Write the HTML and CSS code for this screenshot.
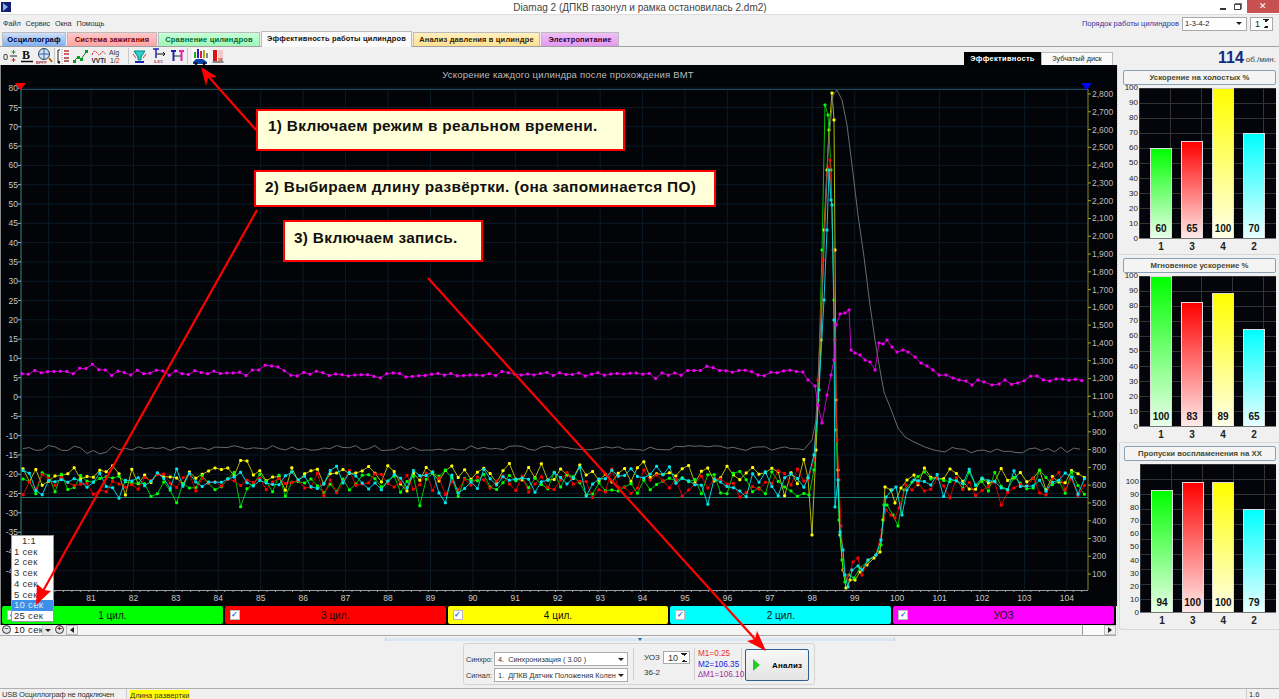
FILE: index.html
```html
<!DOCTYPE html>
<html lang="ru">
<head>
    <meta charset="UTF-8">
    <meta name="viewport" content="width=device-width, initial-scale=1.0">
    <title>Diamag 2</title>
    <link rel="stylesheet" href="styles.css">
</head>
<body>
    <header class="titlebar">
        <svg class="app-icon" width="10" height="10" viewBox="0 0 10 10"><rect width="10" height="10" fill="#14206e"/><path d="M2 1l5 4-5 4z" fill="#7fb4ee"/></svg>
        <span class="title-text">Diamag 2 (ДПКВ газонул и рамка остановилась 2.dm2)</span>
        <div class="win-buttons">
            <span class="win-min"></span>
            <span class="win-max"></span>
            <span class="win-close">✕</span>
        </div>
    </header>

    <div class="menubar">
        <nav class="menu">
            <span>Файл</span><span>Сервис</span><span>Окна</span><span>Помощь</span>
        </nav>
        <div class="order">
            <span class="order-label">Порядок работы цилиндров</span>
            <div class="select order-select"><span>1-3-4-2</span><i class="caret"></i></div>
            <div class="spin order-spin"><span>1</span><i class="spin-arrows"></i></div>
        </div>
    </div>

    <div class="tabs">
        <span class="tab tab-blue">Осциллограф</span>
        <span class="tab tab-pink">Система зажигания</span>
        <span class="tab tab-green">Сравнение цилиндров</span>
        <span class="tab tab-active">Эффективность работы цилиндров</span>
        <span class="tab tab-yellow">Анализ давления в цилиндре</span>
        <span class="tab tab-purple">Электропитание</span>
    </div>

    <div class="toolbar">
        <div class="tools">
            <svg class="tool" width="15" height="16" viewBox="0 0 15 16"><text x="0" y="12" class="ico-text">0</text><path d="M7 8h7" stroke="#222"/><path d="M10.500 2v4M8.500 4h4" stroke="#1a9a2a"/><path d="M10.500 10v4M8.500 12h4" stroke="#d22"/></svg>
            <svg class="tool" width="14" height="16" viewBox="0 0 14 16"><text x="2" y="11" class="ico-bold">B</text><path d="M1 13.500h12" stroke="#111" stroke-width="1.500"/></svg>
            <svg class="tool" width="17" height="16" viewBox="0 0 17 16"><circle cx="8" cy="6" r="5.500" fill="#cfe0f4" stroke="#245"/><path d="M2 6h12M8 1v10" stroke="#36a"/><text x="0" y="15.500" class="ico-tiny">BPPP</text><path d="M13 10l3 4" stroke="#b60" stroke-width="2"/></svg>
            <i class="tool-sep"></i>
            <svg class="tool tool-on" width="15" height="17" viewBox="0 0 15 17"><path d="M4 2H2v13h2" fill="none" stroke="#222"/><circle cx="3" cy="14" r="1.200" fill="#222"/><path d="M8 3h5M8 6h5" stroke="#c33" stroke-width="1.500"/><path d="M8 10h5M8 13h5" stroke="#933" stroke-width="1.500"/><path d="M6 1v15" stroke="#999" stroke-dasharray="1 1"/></svg>
            <svg class="tool" width="16" height="16" viewBox="0 0 16 16"><path d="M1 13l4-4 3 2 6-8" fill="none" stroke="#083"/><g fill="#0a9a2a"><rect x="0" y="12" width="3" height="3"/><rect x="4" y="8" width="3" height="3"/><rect x="7" y="10" width="3" height="3"/><rect x="12" y="2" width="3" height="3"/></g></svg>
            <svg class="tool" width="16" height="16" viewBox="0 0 16 16"><path d="M1 7c2-5 3-5 5-2s3 2 4 0 3-2 5 2" fill="none" stroke="#d23" stroke-dasharray="2 1"/><text x="0.500" y="14.500" class="ico-vvt">VVTi</text></svg>
            <svg class="tool" width="14" height="16" viewBox="0 0 14 16"><text x="0" y="7" class="ico-alg">Alg</text><text x="1" y="15" class="ico-alg">1/<tspan fill="#d22">2</tspan></text></svg>
            <i class="tool-sep sep-wide"></i>
            <svg class="tool" width="15" height="16" viewBox="0 0 15 16"><path d="M2 3h11l-4 6v3H6V9z" fill="#2ad0c8" stroke="#088"/><path d="M1 6l3 4M14 6l-3 4" stroke="#e33"/><path d="M3 14h9" stroke="#22a" stroke-width="2"/></svg>
            <svg class="tool ml-3" width="15" height="16" viewBox="0 0 15 16"><path d="M1 1h6M4 1v9" stroke="#22a" stroke-width="1.500"/><path d="M5 6h8M11 4l2 2-2 2" fill="none" stroke="#111"/><text x="2" y="15" class="ico-tiny">0.2/1</text></svg>
            <svg class="tool ml-1" width="15" height="16" viewBox="0 0 15 16"><path d="M1 3h5M3.500 3v10" stroke="#22a" stroke-width="2"/><path d="M9 3h5M11.500 3v10" stroke="#e2a" stroke-width="2"/><path d="M4 8h7" stroke="#333"/></svg>
            <i class="tool-sep sep-flat"></i>
            <svg class="tool tool-on ml-2" width="17" height="17" viewBox="0 0 17 17"><rect x="2" y="4" width="2" height="6" fill="#2a2"/><rect x="5" y="1" width="2" height="9" fill="#22c"/><rect x="8" y="3" width="2" height="7" fill="#d22"/><rect x="11" y="2" width="2" height="8" fill="#aa2"/><rect x="14" y="5" width="2" height="5" fill="#888"/><path d="M1 14l3-3h7l4 3v2H1z" fill="#14a"/><circle cx="4" cy="15.500" r="1.500" fill="#111"/><circle cx="12" cy="15.500" r="1.500" fill="#111"/></svg>
            <svg class="tool ml-1" width="12" height="16" viewBox="0 0 12 16"><rect x="1" y="2" width="4" height="11" fill="#d11"/><path d="M6 2h5v11H6z" fill="#f3c8c8"/><path d="M0.500 14h11" stroke="#222"/><text x="6" y="12.500" class="ico-tiny">18</text></svg>
        </div>
        <div class="toolbar-right">
            <div class="subtabs">
                <span class="subtab subtab-on">Эффективность</span>
                <span class="subtab">Зубчатый диск</span>
            </div>
            <div class="rpm"><b>114</b><span>об./мин.</span></div>
        </div>
    </div>

    <main class="workspace">
        <section class="scope">
            <svg id="scope-chart" class="scope-chart" width="1115" height="541" viewBox="0 65 1115 541"></svg>
            <div class="legend">
                <div class="legend-item c-green"><i class="check">✓</i><span>1 цил.</span></div>
                <div class="legend-item c-red"><i class="check">✓</i><span>3 цил.</span></div>
                <div class="legend-item c-yellow"><i class="check">✓</i><span>4 цил.</span></div>
                <div class="legend-item c-cyan"><i class="check">✓</i><span>2 цил.</span></div>
                <div class="legend-item c-magenta"><i class="check">✓</i><span>УОЗ</span></div>
            </div>
            <div class="scrollrow">
                <i class="round-btn">−</i>
                <span class="sweep-value">10 сек</span>
                <i class="sweep-drop"><i class="caret"></i></i>
                <i class="round-btn round-plus">+</i>
                <i class="scroll-btn scroll-left"></i>
                <div class="scroll-track"></div>
                <div class="scroll-thumb"></div>
                <i class="scroll-btn scroll-right"></i>
            </div>
        </section>

        <i class="splitter"></i>

        <aside class="side">
            <div class="side-group">
                <div class="side-head">Ускорение на холостых %</div>
                <div class="bar-chart h-150">
                    <div class="y-labels"><span>100</span><span>90</span><span>80</span><span>70</span><span>60</span><span>50</span><span>40</span><span>30</span><span>20</span><span>10</span><span>0</span></div>
                    <div class="plot">
                        <div class="bar b-green" style="height:60%"><span>60</span></div>
                        <div class="bar b-red" style="height:65%"><span>65</span></div>
                        <div class="bar b-yellow" style="height:100%"><span>100</span></div>
                        <div class="bar b-cyan" style="height:70%"><span>70</span></div>
                    </div>
                </div>
                <div class="x-labels"><span>1</span><span>3</span><span>4</span><span>2</span></div>
            </div>
            <div class="side-group">
                <div class="side-head">Мгновенное ускорение %</div>
                <div class="bar-chart h-150">
                    <div class="y-labels"><span>100</span><span>90</span><span>80</span><span>70</span><span>60</span><span>50</span><span>40</span><span>30</span><span>20</span><span>10</span><span>0</span></div>
                    <div class="plot">
                        <div class="bar b-green" style="height:100%"><span>100</span></div>
                        <div class="bar b-red" style="height:83%"><span>83</span></div>
                        <div class="bar b-yellow" style="height:89%"><span>89</span></div>
                        <div class="bar b-cyan" style="height:65%"><span>65</span></div>
                    </div>
                </div>
                <div class="x-labels"><span>1</span><span>3</span><span>4</span><span>2</span></div>
            </div>
            <div class="side-group side-last">
                <div class="side-head">Пропуски воспламенения на ХХ</div>
                <div class="bar-chart h-130">
                    <div class="y-labels"><span>100</span><span>90</span><span>80</span><span>70</span><span>60</span><span>50</span><span>40</span><span>30</span><span>20</span><span>10</span><span>0</span></div>
                    <div class="plot">
                        <div class="bar b-green" style="height:94%"><span>94</span></div>
                        <div class="bar b-red" style="height:100%"><span>100</span></div>
                        <div class="bar b-yellow" style="height:100%"><span>100</span></div>
                        <div class="bar b-cyan" style="height:79%"><span>79</span></div>
                    </div>
                </div>
                <div class="x-labels"><span>1</span><span>3</span><span>4</span><span>2</span></div>
            </div>
        </aside>
    </main>

    <div class="bottom">
        <div class="collapse-grip"><i class="grip-arrow"></i></div>
        <div class="analysis">
            <div class="signals">
                <div class="signal-row">
                    <label>Синхро:</label>
                    <div class="select signal-select"><span>4.&nbsp; Синхронизация ( 3.00 )</span><i class="caret"></i></div>
                </div>
                <div class="signal-row">
                    <label>Сигнал:</label>
                    <div class="select signal-select"><span>1.&nbsp; ДПКВ Датчик Положения Колен</span><i class="caret"></i></div>
                </div>
            </div>
            <div class="uoz">
                <div class="uoz-row">
                    <span>УОЗ</span>
                    <div class="spin uoz-spin"><span>10</span><i class="spin-arrows"></i></div>
                </div>
                <span class="uoz-teeth">36-2</span>
            </div>
            <div class="measures">
                <span class="m-red">M1=0.25</span>
                <span class="m-blue">M2=106.35</span>
                <span class="m-purple">∆M1=106.10</span>
            </div>
            <div class="analyze-wrap">
                <button class="analyze"><i class="play"></i><b>Анализ</b></button>
            </div>
        </div>
    </div>

    <footer class="statusbar">
        <span class="status-usb">USB Осциллограф не подключен</span>
        <span class="status-hint">Длина развертки</span>
        <span class="status-ver">1.6</span>
    </footer>

    <!-- выпадающий список длины развёртки -->
    <ul class="sweep-list">
        <li class="first">1:1</li>
        <li>1 сек</li>
        <li>2 сек</li>
        <li>3 сек</li>
        <li>4 сек</li>
        <li>5 сек</li>
        <li class="picked">10 сек</li>
        <li>25 сек</li>
    </ul>

    <!-- подсказки поверх окна -->
    <div class="note note-1">1) Включаем режим в реальном времени.</div>
    <div class="note note-2">2) Выбираем длину развёртки. (она запоминается ПО)</div>
    <div class="note note-3">3) Включаем запись.</div>
    <svg class="arrows" width="1279" height="699" viewBox="0 0 1279 699">
        <g stroke="#f00" stroke-width="2.200" fill="#f00">
            <path d="M256 130L208 76"/>
            <path d="M257 210L43 591"/>
            <path d="M428 278L755 639"/>
        </g>
        <g fill="#f00">
            <path d="M201 67L217 77 208 78 206 86z"/>
            <path d="M36 605L37 584 44 590 51 591z"/>
            <path d="M766 651L747 641 755 639 757 631z"/>
        </g>
    </svg>

    <script src="chart.js"></script>
</body>
</html>
```

FILE: styles.css
```css
* {
    box-sizing: border-box;
}
html, body {
    margin: 0;
    padding: 0;
    height: 699px;
    overflow: hidden;
}
body {
    position: relative;
    width: 1279px;
    font-family: "Liberation Sans", Arial, sans-serif;
    font-size: 7.6px;
    color: #222;
    background-color: #f0f0f0;
    white-space: nowrap;
}
i {
    font-style: normal;
}

/* заголовок окна */
.titlebar {
    display: flex;
    align-items: center;
    height: 15px;
    background: #fff;
    border-bottom: 1px solid #ddd;
}
.app-icon {
    margin-left: 1px;
}
.title-text {
    flex: 1;
    text-align: center;
    font-size: 10px;
    color: #444;
    padding-left: 52px;
}
.win-buttons {
    display: flex;
    align-items: flex-start;
    height: 14px;
    width: 62px;
}
.win-min {
    width: 6px;
    height: 2px;
    background: #333;
    margin: 8px 8px 0 3px;
}
.win-max {
    width: 7px;
    height: 6px;
    border: 1px solid #444;
    box-shadow: 1px -1px 0 #777;
    margin: 4px 6px 0 0;
}
.win-close {
    width: 32px;
    height: 13px;
    background: #c75050;
    color: #fff;
    font-size: 9px;
    line-height: 13px;
    text-align: center;
}

/* меню */
.menubar {
    display: flex;
    justify-content: space-between;
    align-items: center;
    height: 17px;
    padding: 0 6px 0 3px;
}
.menu {
    display: flex;
    gap: 5px;
    color: #333;
    font-size: 7.300px;
    letter-spacing: -0.100px;
}
.order {
    display: flex;
    align-items: center;
    gap: 3px;
}
.order-label {
    color: #33339a;
    font-size: 7.500px;
}
.select, .spin {
    display: flex;
    align-items: center;
    justify-content: space-between;
    background: #fff;
    border: 1px solid #aaa;
}
.order-select {
    width: 65px;
    height: 14px;
    padding: 0 4px 0 2px;
}
.order-spin {
    width: 23px;
    height: 14px;
    padding: 0 3px 0 4px;
    font-size: 9px;
}
.caret {
    display: block;
    width: 0;
    height: 0;
    border-left: 3px solid transparent;
    border-right: 3px solid transparent;
    border-top: 3px solid #222;
}
.spin-arrows {
    display: block;
    width: 6px;
    height: 9px;
    background:
        linear-gradient(45deg, transparent 50%, #222 50%) left top / 3px 3px no-repeat,
        linear-gradient(-45deg, transparent 50%, #222 50%) right top / 3px 3px no-repeat,
        linear-gradient(135deg, transparent 50%, #222 50%) left bottom / 3px 3px no-repeat,
        linear-gradient(-135deg, transparent 50%, #222 50%) right bottom / 3px 3px no-repeat;
}

/* вкладки */
.tabs {
    display: flex;
    align-items: flex-end;
    height: 15px;
    padding-left: 2px;
    gap: 1px;
    border-bottom: 1px solid #a0a0a0;
}
.tab {
    height: 14px;
    font-size: 7.500px;
    font-weight: bold;
    line-height: 13px;
    letter-spacing: 0.150px;
    text-align: center;
    border: 1px solid #bbb;
    border-bottom: none;
    color: #223;
}
.tab-blue {
    width: 64px;
    background: linear-gradient(#cfe0fa, #7fb0f0);
    color: #003;
}
.tab-pink {
    width: 90px;
    background: linear-gradient(#ffc8c8, #ffa4a4);
    color: #700;
}
.tab-green {
    width: 102px;
    background: linear-gradient(#c8ffd8, #a0f8b8);
    color: #063;
}
.tab-active {
    width: 151px;
    height: 16px;
    background: #fafafa;
    color: #111;
    margin-bottom: -1px;
    line-height: 14px;
}
.tab-yellow {
    width: 127px;
    background: linear-gradient(#fff0c0, #ffe090);
    color: #320;
}
.tab-purple {
    width: 78px;
    background: linear-gradient(#f0c0f8, #e498f0);
    color: #303;
}

/* панель инструментов */
.toolbar {
    display: flex;
    justify-content: space-between;
    height: 18px;
}
.tools {
    display: flex;
    align-items: center;
    gap: 2px;
    padding-left: 3px;
}
.tool {
    display: block;
    flex: none;
}
.tool-on {
    background: #fafafa;
}
.ml-1 { margin-left: 1px; }
.ml-2 { margin-left: 2px; }
.ml-3 { margin-left: 3px; }
.tool-sep {
    width: 1px;
    height: 16px;
    background: #c8c8c8;
    margin: 0 -1px;
}
.sep-wide {
    margin: 0 1px 0 3px;
}
.sep-flat {
    margin: 0;
}
.ico-text {
    font-size: 9px;
    fill: #222;
}
.ico-bold {
    font-family: "Liberation Serif", serif;
    font-size: 12px;
    font-weight: bold;
    fill: #111;
}
.ico-tiny {
    font-size: 4px;
    fill: #a33;
    font-weight: bold;
}
.ico-vvt {
    font-size: 6.500px;
    fill: #223;
    font-weight: bold;
}
.ico-alg {
    font-size: 7px;
    fill: #333;
}
.toolbar-right {
    display: flex;
    align-items: flex-end;
}
.subtabs {
    display: flex;
    margin-right: 105px;
}
.subtab {
    width: 72px;
    height: 13px;
    line-height: 12px;
    text-align: center;
    font-size: 7.300px;
    background: #fafafa;
    border: 1px solid #bbb;
    border-bottom: none;
    color: #222;
}
.subtab-on {
    width: 77px;
    background: #000;
    color: #fff;
    font-weight: bold;
    font-size: 7.500px;
    letter-spacing: 0.300px;
    border-color: #000;
}
.rpm {
    display: flex;
    align-items: flex-end;
    width: 61px;
    gap: 2px;
    color: #444;
    font-size: 8px;
    line-height: 11px;
}
.rpm b {
    font-size: 16px;
    line-height: 15px;
    color: #102a80;
}

/* рабочая область */
.workspace {
    display: flex;
    height: 571px;
}
.scope {
    width: 1116px;
    padding-left: 1px;
    background: #000;
    border-left: 1px solid #888;
    height: 571px;
}
.scope-chart {
    display: block;
}
.legend {
    display: flex;
    gap: 2px;
    height: 18px;
    padding-right: 2px;
}
.legend-item {
    flex: 1;
    display: flex;
    align-items: center;
    padding-left: 5px;
    border-radius: 2px;
    font-size: 10px;
    color: #111;
}
.legend-item span {
    flex: 1;
    text-align: center;
    padding-right: 15px;
}
.check {
    display: block;
    width: 10px;
    height: 10px;
    background: #fff;
    border: 1px solid #bbb;
    color: #2a6ee8;
    font-size: 8px;
    font-weight: bold;
    line-height: 8px;
    text-align: center;
}
.c-green { background: #00ff00; }
.c-red { background: #ff0000; }
.c-yellow { background: #ffff00; }
.c-cyan { background: #00ffff; }
.c-magenta { background: #ff00ff; }

.scrollrow {
    display: flex;
    align-items: stretch;
    height: 11px;
    margin-left: -2px;
    margin-top: 1px;
    background: #f0f0f0;
    border-bottom: 1px solid #a8a8a8;
    width: 1116px;
}
.round-btn {
    display: block;
    width: 9px;
    height: 9px;
    margin: 0 0 0 2px;
    border: 1px solid #333;
    border-radius: 50%;
    background: #dfe4ea;
    font-size: 8px;
    line-height: 6px;
    text-align: center;
    color: #113;
    flex: none;
}
.round-plus {
    color: #a00;
    margin-left: 2px;
    font-weight: bold;
}
.sweep-value {
    width: 31px;
    padding-left: 3px;
    background: #fff;
    font-size: 9.500px;
    line-height: 10px;
    letter-spacing: 0.300px;
    overflow: hidden;
}
.sweep-drop {
    display: flex;
    align-items: center;
    justify-content: center;
    flex: none;
    width: 11px;
    background: #e8e8e8;
    border-left: 1px solid #ccc;
}
.scroll-btn {
    display: flex;
    align-items: center;
    justify-content: center;
    width: 12px;
    flex: none;
    background: #f0f0f0;
    border: 1px solid #bbb;
}
.scroll-left {
    margin-left: 2px;
}
.scroll-left::after {
    content: "";
    border-top: 3px solid transparent;
    border-bottom: 3px solid transparent;
    border-right: 4px solid #222;
}
.scroll-right::after {
    content: "";
    border-top: 3px solid transparent;
    border-bottom: 3px solid transparent;
    border-left: 4px solid #222;
}
.scroll-track {
    flex: 1;
    background: #f4f4f4;
    border-right: 1px solid #999;
}
.scroll-thumb {
    width: 21px;
    background: #fafafa;
}

.splitter {
    display: block;
    width: 3px;
    flex: none;
    background: repeating-linear-gradient(#f0f0f0 0 1px, #bcd0ea 1px 2px) center / 1px 100% no-repeat;
}

/* правая панель с гистограммами */
.side {
    flex: 1;
    display: flex;
    flex-direction: column;
    padding-top: 2px;
}
.side-group {
    height: 188px;
    padding: 3px 3px 0 4px;
    border-bottom: 1px solid #d8d8d8;
}
.side-last {
    height: 187px;
    border-left: 1px solid #d8d8d8;
    border-radius: 0 0 0 3px;
}
.side-head {
    height: 15px;
    line-height: 13px;
    text-align: center;
    font-size: 7.800px;
    font-weight: bold;
    color: #4a4a30;
    background: #f4f4f4;
    border: 1px solid #8aa0b4;
    border-radius: 2px;
}
.bar-chart {
    display: flex;
    margin-top: 3px;
}
.h-150 {
    height: 151px;
}
.h-130 {
    height: 149px;
}
.h-130 .y-labels {
    height: 137px;
    margin-top: 15px;
}
.y-labels {
    display: flex;
    flex-direction: column;
    justify-content: space-between;
    width: 15px;
    margin: -3px 1px -3px 0;
    font-size: 8px;
    line-height: 6px;
    text-align: right;
    color: #222;
}
.plot {
    flex: 1;
    display: flex;
    align-items: flex-end;
    justify-content: space-between;
    padding: 0 11px;
    border-bottom: 1px solid #777;
    background:
        repeating-linear-gradient(to bottom, #333 0 1px, transparent 1px 15px),
        repeating-linear-gradient(to right, #333 0 1px, transparent 1px 31px),
        #03050a;
}
.h-130 .plot {
    padding-top: 18px;
}
.bar {
    display: flex;
    align-items: flex-end;
    justify-content: center;
    width: 22px;
    border: 1px solid #ddd;
    border-bottom: none;
    font-size: 10px;
    font-weight: bold;
    color: #111;
    padding-bottom: 4px;
}
.b-green { background: linear-gradient(#00ff00, #eaffea); }
.b-red { background: linear-gradient(#ff0000, #ffeaea); }
.b-yellow { background: linear-gradient(#ffff00, #ffffe8); }
.b-cyan { background: linear-gradient(#00ffff, #eaffff); }
.x-labels {
    display: flex;
    justify-content: space-between;
    margin-left: 16px;
    padding: 2px 11px 0;
    font-size: 10px;
    font-weight: bold;
    color: #222;
}
.x-labels span {
    width: 22px;
    text-align: center;
}

/* нижняя панель */
.bottom {
    height: 50px;
}
.collapse-grip {
    display: flex;
    justify-content: center;
    width: 510px;
    height: 3px;
    margin: 2px 0 0 385px;
    background: #dbe6f4;
    border: 1px solid #c4c4c4;
    border-width: 0 1px;
}
.grip-arrow {
    display: block;
    width: 0;
    height: 0;
    border-left: 2px solid transparent;
    border-right: 2px solid transparent;
    border-top: 3px solid #26a;
}
.analysis {
    display: flex;
    align-items: stretch;
    width: 352px;
    height: 42px;
    margin: 2px 0 0 463px;
    padding: 4px 2px;
    border: 1px solid #d4d4d4;
    border-radius: 3px;
    background: #f0f0f0;
}
.signals {
    display: flex;
    flex-direction: column;
    gap: 2px;
    width: 168px;
    padding: 4px 5px 0 0;
    border-right: 1px solid #d0d0d0;
}
.signal-row {
    display: flex;
    align-items: center;
    justify-content: space-between;
    height: 14px;
    color: #333;
    font-size: 7.200px;
}
.signal-select {
    width: 134px;
    height: 14px;
    padding: 0 3px;
    font-size: 7.300px;
}
.signal-select .caret {
    flex: none;
    margin-left: 2px;
}
.uoz {
    display: flex;
    flex-direction: column;
    width: 61px;
    padding: 3px 0 0 10px;
    border-right: 1px solid #d0d0d0;
    color: #333;
    gap: 4px;
    font-size: 8px;
}
.uoz-row {
    display: flex;
    align-items: center;
    justify-content: space-between;
    padding-right: 4px;
}
.uoz-spin {
    width: 27px;
    height: 13px;
    padding: 0 2px 0 4px;
    font-size: 9px;
}
.measures {
    display: flex;
    flex-direction: column;
    width: 47px;
    padding: 1px 0 0 3px;
    font-size: 8.200px;
    line-height: 10.500px;
    border-right: 1px solid #d0d0d0;
}
.m-red { color: #e83030; }
.m-blue { color: #2020e0; }
.m-purple { color: #a030a0; }
.analyze-wrap {
    padding-left: 3px;
    margin-top: 1px;
}
.analyze {
    display: flex;
    align-items: center;
    width: 64px;
    height: 32px;
    padding: 0 0 0 7px;
    background: linear-gradient(#f8f8f8, #e4e4e4);
    border: 1px solid #2e5f8e;
    border-radius: 2px;
    font-family: inherit;
    font-size: 8px;
}
.analyze b {
    margin-left: 12px;
    letter-spacing: 0.200px;
}
.play {
    width: 0;
    height: 0;
    border-top: 6px solid transparent;
    border-bottom: 6px solid transparent;
    border-left: 7px solid #20d020;
}

/* строка состояния */
.statusbar {
    display: flex;
    align-items: center;
    height: 13px;
    border-top: 1px solid #b0b0b0;
    color: #333;
}
.status-usb {
    width: 127px;
    padding-left: 2px;
    border-right: 1px solid #ccc;
    line-height: 12px;
    letter-spacing: -0.200px;
}
.status-hint {
    margin-left: 3px;
    background: #ffff00;
    color: #333;
    line-height: 11px;
}
.status-ver {
    margin-left: auto;
    width: 33px;
    padding-left: 2px;
    border-left: 1px solid #ccc;
    line-height: 12px;
}

/* выпадающий список */
.sweep-list {
    position: absolute;
    left: 11px;
    top: 535px;
    width: 43px;
    height: 87px;
    margin: 0;
    padding: 0;
    list-style: none;
    background: #fff;
    border: 1px solid #999;
    font-size: 9.500px;
    letter-spacing: 0.300px;
    line-height: 10.700px;
    color: #333;
}
.sweep-list li {
    padding-left: 2px;
}
.sweep-list .first {
    padding-left: 10px;
}
.sweep-list .picked {
    background: #3d8fe8;
    color: #dfeeff;
}

/* подсказки и стрелки */
.note {
    position: absolute;
    background: #ffffd9;
    border: 2px solid #f00;
    color: #111;
    font-size: 15.400px;
    font-weight: bold;
    letter-spacing: 0.300px;
    line-height: 17px;
}
.note-1 {
    left: 256px;
    top: 109px;
    width: 369px;
    height: 42px;
    padding: 6px 0 0 10px;
}
.note-2 {
    left: 254px;
    top: 170px;
    width: 462px;
    height: 37px;
    padding: 6px 0 0 9px;
}
.note-3 {
    left: 283px;
    top: 220px;
    width: 200px;
    height: 42px;
    padding: 7px 0 0 9px;
}
.arrows {
    position: absolute;
    left: 0;
    top: 0;
    pointer-events: none;
}

/* подписи графика */
.axis-left, .axis-x, .axis-right {
    font-size: 8.500px;
    fill: #c8c8c8;
}
.axis-left {
    text-anchor: end;
}
.axis-x {
    text-anchor: middle;
}
.axis-right {
    fill: #bbb;
}
.chart-title {
    font-size: 9.500px;
    fill: #bbb;
    text-anchor: middle;
    letter-spacing: 0.200px;
}
```

FILE: chart.js
```js
// График ускорения: оси и кривые рисуются в координатах страницы
const svg = document.getElementById('scope-chart');
const NS = 'http://www.w3.org/2000/svg';

function add(name, attrs, text) {
    const el = document.createElementNS(NS, name);
    for (const key in attrs) el.setAttribute(key, attrs[key]);
    if (text !== undefined) el.textContent = text;
    svg.appendChild(el);
    return el;
}

// простой генератор, чтобы картинка не менялась от запуска к запуску
let seed = 4711;
function rnd() {
    seed = (seed * 16807) % 2147483647;
    return seed / 2147483647;
}

const LEFT = 19, RIGHT = 1086, TOP = 89, BOTTOM = 590;
const xOf = t => 89 + 42.43 * (t - 81);
const yOf = v => 397 - 3.86 * v;
const yRight = v => 94 + (2800 - v) * 0.1778;

add('rect', { x: 0, y: 65, width: 1115, height: 541, fill: '#020408' });
add('text', { x: 566, y: 78, class: 'chart-title' }, 'Ускорение каждого цилиндра после прохождения ВМТ');

// сетка
for (let t = 80; t <= 104; t++) {
    add('line', { x1: xOf(t), x2: xOf(t), y1: TOP, y2: BOTTOM, stroke: '#0b1a26' });
}
for (let v = 80; v >= -45; v -= 5) {
    add('line', { x1: LEFT, x2: RIGHT, y1: yOf(v), y2: yOf(v), stroke: '#0b1a26' });
}
add('line', { x1: LEFT, x2: RIGHT, y1: TOP + 0.5, y2: TOP + 0.5, stroke: '#17505c' });
add('line', { x1: LEFT, x2: RIGHT, y1: 497.5, y2: 497.5, stroke: '#1f7a78' });

// левая ось
add('line', { x1: LEFT, x2: LEFT, y1: TOP, y2: BOTTOM, stroke: '#2a8a8a' });
for (let v = 80; v >= -45; v -= 5) {
    add('line', { x1: LEFT - 3, x2: LEFT, y1: yOf(v), y2: yOf(v), stroke: '#aaa' });
    add('text', { x: LEFT - 3, y: yOf(v) + 3, class: 'axis-left' }, v);
}

// правая ось
add('line', { x1: RIGHT, x2: RIGHT, y1: TOP, y2: BOTTOM, stroke: '#8a8a20' });
for (let v = 2800; v >= 100; v -= 100) {
    add('line', { x1: RIGHT, x2: RIGHT + 3, y1: yRight(v), y2: yRight(v), stroke: '#aa2' });
    const label = v >= 1000 ? Math.floor(v / 1000) + ',' + String(v % 1000).padStart(3, '0') : v;
    add('text', { x: RIGHT + 4, y: yRight(v) + 3, class: 'axis-right' }, label);
}

// нижняя ось
add('line', { x1: LEFT, x2: RIGHT, y1: BOTTOM + 0.5, y2: BOTTOM + 0.5, stroke: '#999' });
for (let x = LEFT; x < RIGHT; x += 8.486) {
    add('line', { x1: x, x2: x, y1: BOTTOM, y2: BOTTOM + 2, stroke: '#999' });
}
for (let t = 81; t <= 104; t++) {
    add('text', { x: xOf(t), y: 601, class: 'axis-x' }, t);
}

// маркеры курсоров
add('path', { d: 'M13 83h11l-5.500 7z', fill: '#f00' });
add('path', { d: 'M1079 83h11l-5.500 7z', fill: '#00f' });

function noisePart(base, spread, from, to) {
    const pts = [];
    for (let x = from; x <= to; x += 6.4) {
        let y = base + (rnd() + rnd() - 1) * spread;
        if (rnd() > 0.93) y += 12;
        pts.push([x, y]);
    }
    return pts;
}

function draw(pts, color, lineOpacity) {
    add('polyline', {
        points: pts.map(p => p[0].toFixed(1) + ',' + p[1].toFixed(1)).join(' '),
        fill: 'none',
        stroke: color,
        'stroke-opacity': lineOpacity
    });
    for (const p of pts) {
        add('rect', { x: p[0] - 1.5, y: p[1] - 1.5, width: 3, height: 3, fill: color, rx: 1 });
    }
}

const series = [
    {
        color: '#ffff00', opacity: 0.7, base: 473, tail: 477,
        peak: [[806, 478], [810, 535], [814, 450], [819, 340], [822, 230], [825, 170], [827, 130], [830, 93], [832, 120], [833, 250], [834, 400], [836, 470], [838, 535], [841, 570], [844, 588], [848, 580], [853, 580], [858, 572], [865, 565], [872, 558], [878, 552], [881, 520], [883, 487], [889, 490], [893, 503], [899, 488], [905, 480], [912, 475]]
    },
    {
        color: '#00ff00', opacity: 0.75, base: 483, tail: 482,
        peak: [[807, 495], [812, 470], [816, 400], [820, 250], [823, 105], [826, 115], [829, 170], [832, 300], [834, 430], [837, 520], [840, 560], [843, 582], [847, 575], [852, 578], [858, 568], [866, 561], [874, 555], [879, 545], [882, 505], [885, 505], [891, 515], [896, 526], [902, 490], [910, 482]]
    },
    {
        color: '#ff0000', opacity: 0.8, base: 482, tail: 485,
        peak: [[806, 480], [812, 460], [816, 380], [821, 260], [825, 175], [828, 160], [831, 250], [833, 340], [835, 440], [837, 480], [839, 526], [842, 570], [845, 580], [851, 562], [856, 558], [860, 575], [866, 560], [874, 555], [880, 530], [884, 510], [889, 515], [893, 518], [897, 508], [904, 485], [910, 490]]
    },
    {
        color: '#00e5ee', opacity: 0.9, base: 480, tail: 480,
        peak: [[806, 478], [812, 455], [817, 390], [822, 300], [825, 230], [827, 170], [829, 200], [830, 205], [832, 320], [833, 507], [836, 480], [838, 532], [841, 550], [843, 575], [846, 587], [850, 570], [856, 566], [860, 570], [866, 560], [874, 555], [879, 540], [884, 497], [890, 490], [894, 487], [900, 515], [905, 490], [912, 480]]
    }
];

for (const s of series) {
    const pts = noisePart(s.base, 15, 21, 803).concat(s.peak, noisePart(s.tail, 15, 916, 1084));
    draw(pts, s.color, s.opacity);
}

// обороты: серая тонкая линия
const gray = [];
for (let x = 21; x <= 806; x += 6.4) {
    let y = 448 + (rnd() - 0.5) * 5;
    if (x > 80 && x < 110) y += 4;
    gray.push([x, y]);
}
gray.push([810, 440], [814, 420], [820, 300], [826, 150], [831, 95], [835, 90], [840, 100], [845, 125], [850, 165], [856, 215], [862, 257], [868, 305], [873, 340], [878, 370], [882, 392], [890, 412], [896, 428], [903, 437], [912, 442], [923, 447], [932, 450], [943, 452]);
for (let x = 950; x <= 1084; x += 6.4) {
    gray.push([x, 450 + (rnd() - 0.5) * 6]);
}
add('polyline', {
    points: gray.map(p => p[0].toFixed(1) + ',' + p[1].toFixed(1)).join(' '),
    fill: 'none',
    stroke: '#6a6a6a'
});

// УОЗ
const bump = (x, c, w, h) => h * Math.exp(-((x - c) * (x - c)) / (2 * w * w));
const magenta = [];
for (let x = 20; x <= 802; x += 6.4) {
    let y = 373 + (rnd() - 0.5) * 6;
    y -= bump(x, 88, 9, 8) + bump(x, 270, 9, 7) + bump(x, 705, 12, 4);
    y += bump(x, 380, 40, 2) + bump(x, 650, 25, 3);
    magenta.push([x, y]);
}
magenta.push([806, 380], [813, 386], [816, 405], [820, 423], [825, 395], [829, 375], [832, 360], [834, 325], [838, 314], [843, 313], [847, 310], [849, 350], [853, 353], [858, 355], [863, 360], [868, 362], [873, 370], [877, 343], [881, 344], [885, 340], [890, 347], [895, 352], [901, 350], [906, 352], [913, 357], [919, 363], [925, 366], [931, 370], [937, 375], [944, 375], [951, 378], [957, 380], [964, 381], [970, 385], [976, 380], [982, 382], [990, 385], [997, 384]);
for (let x = 1003; x <= 1084; x += 6.4) {
    magenta.push([x, 380 - bump(x, 1032, 6, 4) + bump(x, 1015, 8, 4) + (rnd() - 0.5) * 3]);
}
draw(magenta, '#f000f0', 0.8);
```
